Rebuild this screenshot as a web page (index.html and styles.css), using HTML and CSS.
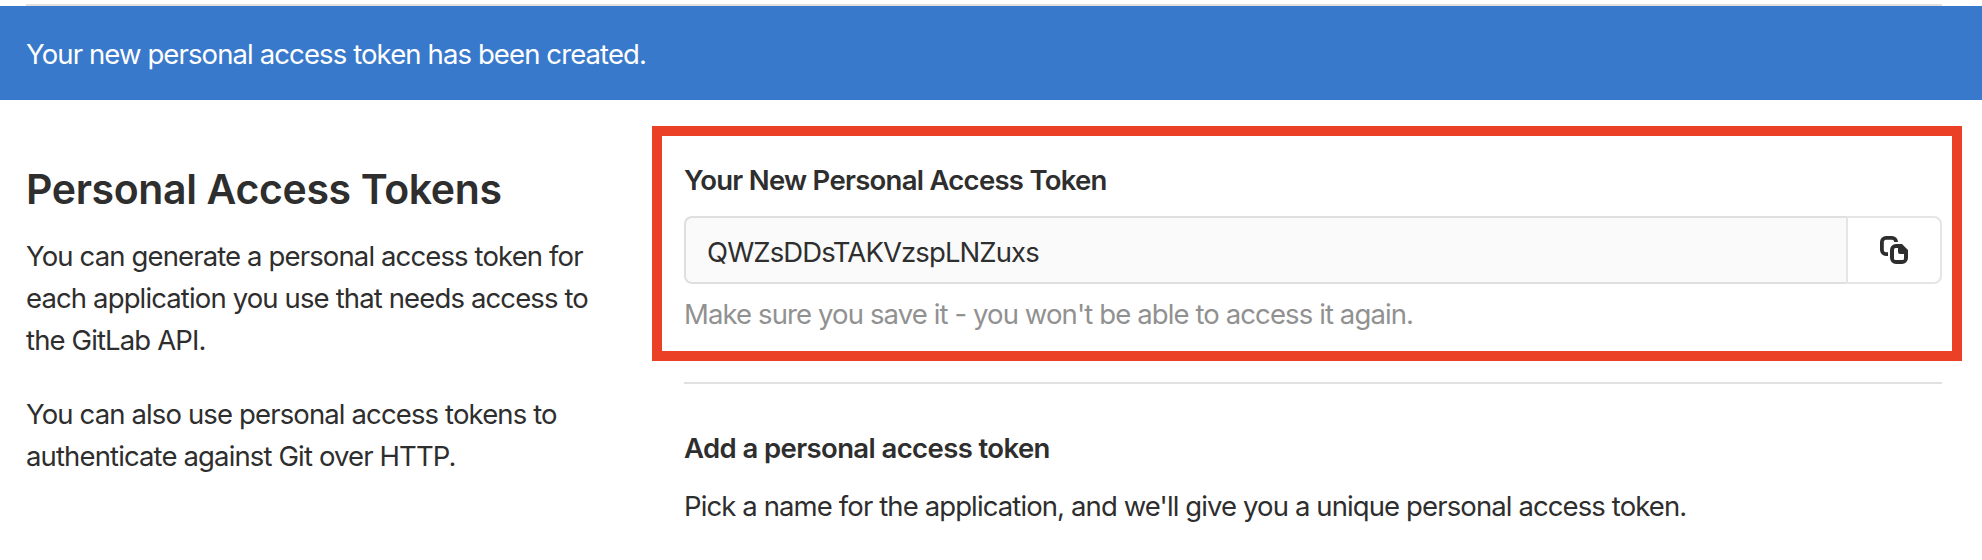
FILE: index.html
```html
<!DOCTYPE html>
<html lang="en">
<head>
<meta charset="utf-8">
<title>Personal Access Tokens</title>
<link rel="stylesheet" href="styles.css">
</head>
<body>
<div class="top-rule"></div>
<div class="flash">Your new personal access token has been created.</div>
<main class="page">
  <aside class="intro">
    <h1 class="intro-title">Personal Access Tokens</h1>
    <p class="text">You can generate a personal access token for<br>each application you use that needs access to<br>the GitLab API.</p>
    <p class="text">You can also use personal access tokens to<br>authenticate against Git over HTTP.</p>
  </aside>
  <section class="content">
    <div class="highlight">
      <h2 class="subtitle">Your New Personal Access Token</h2>
      <div class="token-group">
        <div class="token-value">QWZsDDsTAKVzspLNZuxs</div>
        <button class="copy" aria-label="Copy personal access token">
          <svg class="copy-icon" viewBox="0 0 16 16"><path fill="none" stroke="currentColor" stroke-width="1.9" d="M9.05 4A2.05 2.05 0 0 0 7 1.95H4A2.05 2.05 0 0 0 1.95 4V8A2.05 2.05 0 0 0 4 10.05H5"/><path fill="currentColor" fill-rule="evenodd" d="M9 5h3l3 3v4a3 3 0 0 1-3 3H9a3 3 0 0 1-3-3V8a3 3 0 0 1 3-3zM8 7.8V12.2a.8.8 0 0 0 .8.8h3.4a.8.8 0 0 0 .8-.8V10H11a1 1 0 0 1-1-1V7H8.800a.8.8 0 0 0-.8.8z"/></svg>
        </button>
      </div>
      <p class="help">Make sure you save it - you won't be able to access it again.</p>
    </div>
    <hr class="divider">
    <div class="add">
      <h2 class="subtitle">Add a personal access token</h2>
      <p class="text">Pick a name for the application, and we'll give you a unique personal access token.</p>
    </div>
  </section>
</main>
</body>
</html>
```
FILE: styles.css
```css
* { box-sizing: border-box; }
body {
  margin: 0;
  background: #fff;
  color: #2e2e2e;
  font-family: Inter, sans-serif;
  font-size: 27.5px;
  line-height: 42px;
  letter-spacing: -0.89px;
}
h1, h2, p { margin: 0; white-space: nowrap; }
.top-rule { height: 2px; margin: 4px 40px 0 26px; background: #e1e1e1; }
.flash { height: 94px; padding: 27px 26px 25px; background: #3879cb; color: #fff; }
.page { display: flex; }
.intro { width: 652px; padding: 64px 0 0 26px; }
.intro-title { font-size: 41px; font-weight: 600; line-height: 50px; letter-spacing: -0.36px; margin-bottom: 21px; }
.intro .text { letter-spacing: -0.87px; }
.intro .text + .text { margin-top: 32px; }
.content { width: 1310px; padding-top: 26px; }
.highlight { height: 235px; padding: 23px 10px 0 22px; border: 10px solid #ec4026; }
.subtitle { font-size: 27.5px; font-weight: 600; letter-spacing: -0.6px; }
.highlight .subtitle { margin-bottom: 15px; letter-spacing: -0.72px; }
.token-group { display: flex; height: 68px; }
.token-value {
  flex: 1;
  padding: 13px 0 0 21px;
  border: 2px solid #dfdfdf;
  border-right: 0;
  border-radius: 8px 0 0 8px;
  background: #fafafa;
  letter-spacing: -0.9px;
}
.copy {
  width: 96px;
  padding: 0;
  display: flex;
  align-items: center;
  justify-content: center;
  border: 2px solid #e5e5e5;
  border-radius: 0 8px 8px 0;
  background: #fff;
  color: #2e2e2e;
}
.copy-icon { width: 32px; height: 32px; }
.help { margin-top: 9px; color: #919191; }
.divider { height: 2px; margin: 21px 20px 0 32px; border: 0; background: #e1e1e1; }
.add { padding: 43px 0 0 32px; }
.add .text { margin-top: 16px; }
```
